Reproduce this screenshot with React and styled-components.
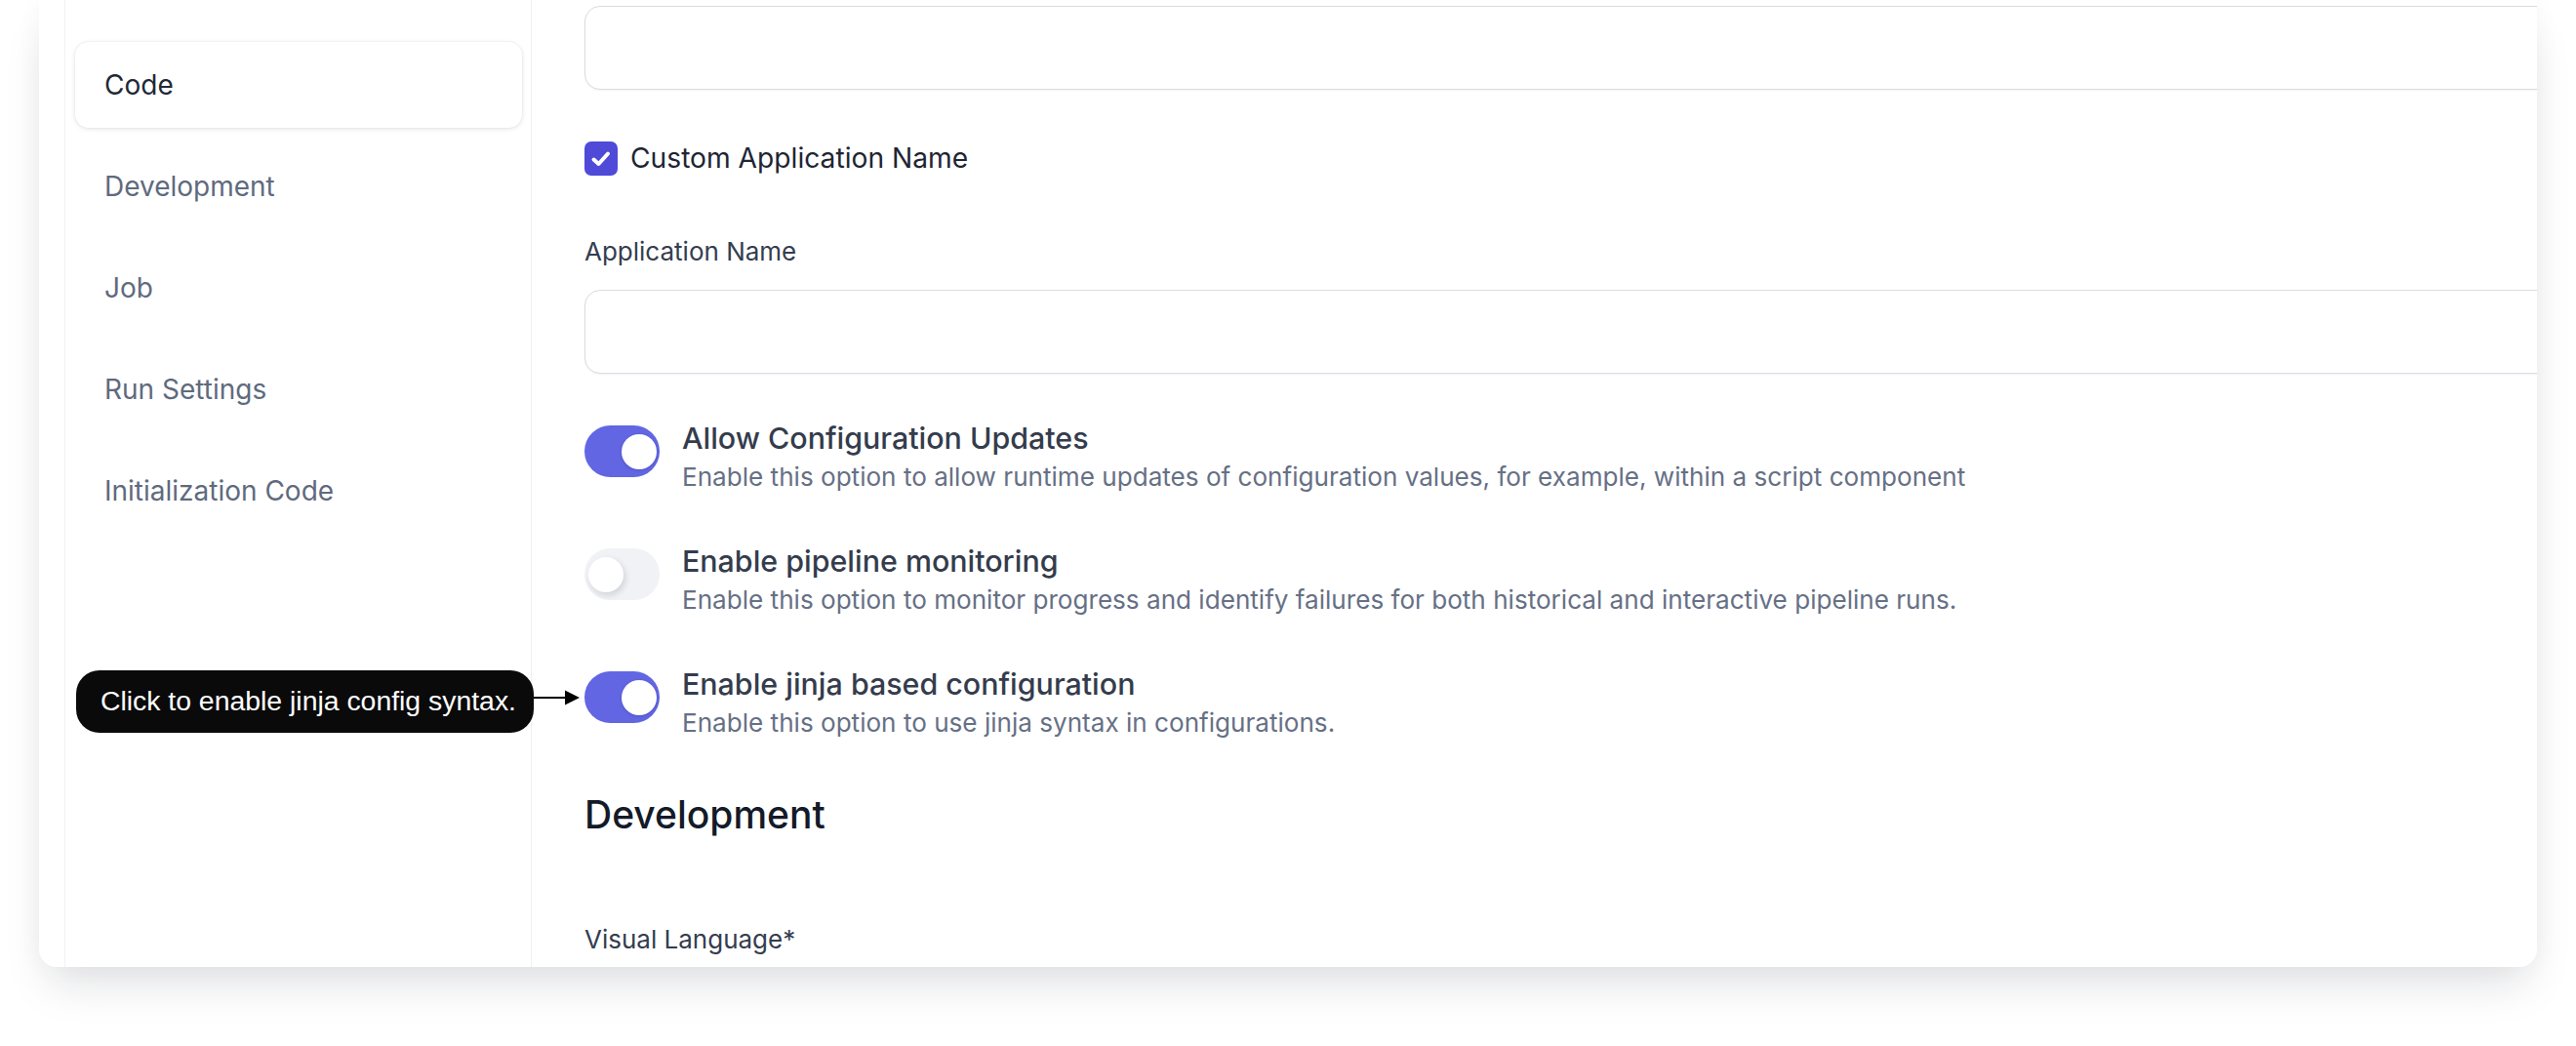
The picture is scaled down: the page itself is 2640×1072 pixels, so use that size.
import React from "react";
import styled, { createGlobalStyle, css } from "styled-components";

const GlobalStyle = createGlobalStyle`
  html, body { margin: 0; padding: 0; background: #ffffff; }
  body {
    font-family: Inter, "Noto Sans", "Liberation Sans", sans-serif;
    overflow: hidden;
    -webkit-font-smoothing: antialiased;
  }
  * { box-sizing: border-box; }
`;

const Page = styled.div`
  width: 2640px;
  height: 1072px;
  padding: 0 40px;
`;

const Card = styled.div`
  display: flex;
  height: 991px;
  background: #ffffff;
  border-radius: 0 0 18px 18px;
  box-shadow: 0 26px 46px -10px rgba(17, 24, 39, 0.13), 0 0 28px rgba(17, 24, 39, 0.035);
  overflow: hidden;
  padding-left: 26px;
`;

const Sidebar = styled.nav`
  width: 479px;
  flex-shrink: 0;
  border-left: 1px solid #f1f2f6;
  border-right: 1px solid #eef0f4;
  padding: 43px 9px 0 10px;
  display: flex;
  flex-direction: column;
  gap: 16px;
`;

const NavItem = styled.div`
  height: 88px;
  display: flex;
  align-items: center;
  padding-left: 30px;
  font-size: 28px;
  line-height: 36px;
  color: #5f6a7e;
  border-radius: 14px;
  ${(p) =>
    p.$active &&
    css`
      color: #1f2937;
      background: #ffffff;
      box-shadow: 0 1px 5px rgba(15, 23, 42, 0.12), 0 0 0 1px rgba(15, 23, 42, 0.025);
    `}
`;

const Main = styled.main`
  flex: 1;
  min-width: 0;
  padding: 6px 0 0 54px;
  display: flex;
  flex-direction: column;
`;

const TextInput = styled.div`
  height: 86px;
  margin-right: -24px;
  margin-top: ${(p) => p.$mt || 0}px;
  border: 1.5px solid #d9dce3;
  border-radius: 16px;
  background: #ffffff;
  box-shadow: 0 1px 2px rgba(15, 23, 42, 0.05);
`;

const CheckRow = styled.label`
  margin-top: 53px;
  display: flex;
  align-items: center;
  gap: 13px;
  font-size: 28.2px;
  line-height: 35px;
  color: #1e2533;
`;

const CheckBox = styled.span`
  width: 34px;
  height: 35px;
  border-radius: 7px;
  background: #4f4ad8;
  display: flex;
  align-items: center;
  justify-content: center;
`;

const FieldLabel = styled.div`
  margin-top: ${(p) => p.$mt}px;
  font-size: 26px;
  line-height: 36px;
  color: #343d4f;
`;

const ToggleList = styled.div`
  margin-top: 48px;
  display: flex;
  flex-direction: column;
  gap: 50px;
`;

const ToggleRow = styled.div`
  display: flex;
  align-items: flex-start;
  gap: 23px;
`;

const SwitchWrap = styled.div`
  position: relative;
  flex-shrink: 0;
  margin-top: 5px;
`;

const Track = styled.div`
  position: relative;
  width: 77px;
  height: 53px;
  border-radius: 27px;
  background: ${(p) => (p.$on ? "#6266e3" : "#f1f2f5")};
`;

const Knob = styled.span`
  position: absolute;
  top: 8.5px;
  left: ${(p) => (p.$on ? 38 : 4)}px;
  width: 36px;
  height: 36px;
  border-radius: 50%;
  background: #ffffff;
  box-shadow: ${(p) =>
    p.$on ? "0 1px 3px rgba(30, 30, 90, 0.25)" : "2px 3px 6px rgba(15, 23, 42, 0.14)"};
`;

const ToggleText = styled.div`
  display: flex;
  flex-direction: column;
  gap: 4px;
`;

const ToggleTitle = styled.div`
  font-size: 30.4px;
  font-weight: 500;
  line-height: 36px;
  color: #343c4c;
`;

const ToggleDesc = styled.div`
  font-size: 26.1px;
  line-height: 36px;
  color: #667085;
`;

const SectionTitle = styled.h2`
  margin: 51.5px 0 0;
  font-size: 39px;
  font-weight: 500;
  line-height: 48px;
  color: #141a28;
`;

const Callout = styled.div`
  position: absolute;
  right: calc(100% + 5px);
  top: 50%;
  transform: translateY(-50%);
  display: flex;
  align-items: center;
`;

const Bubble = styled.div`
  height: 64px;
  margin-top: 8px;
  display: flex;
  align-items: center;
  padding: 0 18px 0 25px;
  border-radius: 24px;
  background: #0a0a0a;
  color: #ffffff;
  font-family: "Liberation Sans", Arial, sans-serif;
  font-size: 28.4px;
  white-space: nowrap;
`;

const CheckMark = () => (
  <svg width="24" height="24" viewBox="0 0 24 24" fill="none">
    <path d="M4.5 12.5 L9.5 17 L19 6.5" stroke="#fff" strokeWidth="4" strokeLinecap="round" strokeLinejoin="round" />
  </svg>
);

const Pointer = () => (
  <svg width="47" height="16" viewBox="0 0 47 16">
    <line x1="0" y1="8" x2="33" y2="8" stroke="#000" strokeWidth="2" />
    <polygon points="32,0.5 47,8 32,15.5" fill="#000" />
  </svg>
);

const Switch = ({ on, tip }) => (
  <SwitchWrap>
    <Track $on={on}>
      <Knob $on={on} />
    </Track>
    {tip && (
      <Callout>
        <Bubble>{tip}</Bubble>
        <Pointer />
      </Callout>
    )}
  </SwitchWrap>
);

const navItems = ["Code", "Development", "Job", "Run Settings", "Initialization Code"];

const toggles = [
  {
    on: true,
    title: "Allow Configuration Updates",
    desc: "Enable this option to allow runtime updates of configuration values, for example, within a script component",
  },
  {
    on: false,
    title: "Enable pipeline monitoring",
    desc: "Enable this option to monitor progress and identify failures for both historical and interactive pipeline runs.",
  },
  {
    on: true,
    title: "Enable jinja based configuration",
    desc: "Enable this option to use jinja syntax in configurations.",
    tip: "Click to enable jinja config syntax.",
  },
];

export default function App() {
  return (
    <Page>
      <GlobalStyle />
      <Card>
        <Sidebar>
          {navItems.map((item, i) => (
            <NavItem key={item} $active={i === 0}>
              {item}
            </NavItem>
          ))}
        </Sidebar>
        <Main>
          <TextInput />
          <CheckRow>
            <CheckBox>
              <CheckMark />
            </CheckBox>
            Custom Application Name
          </CheckRow>
          <FieldLabel $mt={59.5}>Application Name</FieldLabel>
          <TextInput $mt={21.5} />
          <ToggleList>
            {toggles.map((t) => (
              <ToggleRow key={t.title}>
                <Switch on={t.on} tip={t.tip} />
                <ToggleText>
                  <ToggleTitle>{t.title}</ToggleTitle>
                  <ToggleDesc>{t.desc}</ToggleDesc>
                </ToggleText>
              </ToggleRow>
            ))}
          </ToggleList>
          <SectionTitle>Development</SectionTitle>
          <FieldLabel $mt={86.5}>Visual Language*</FieldLabel>
        </Main>
      </Card>
    </Page>
  );
}
